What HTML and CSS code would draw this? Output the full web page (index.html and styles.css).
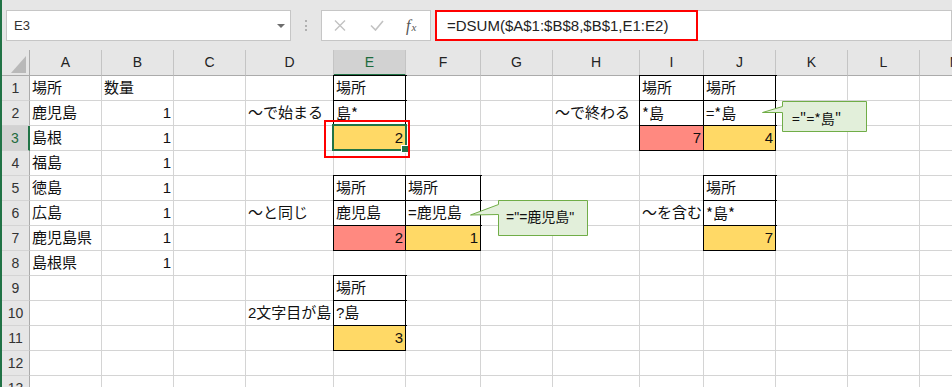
FILE: index.html
```html
<!DOCTYPE html>
<html lang="ja">
<head>
    <meta charset="UTF-8">
    <title>DSUM - ワイルドカード</title>
    <link rel="stylesheet" href="styles.css">
</head>
<body>
<div class="app">
    <div class="bar">
        <div class="namebox"><span>E3</span><i class="caret"></i></div>
        <div class="grip"></div>
        <div class="btns">
            <svg class="ic-x" width="12" height="11" viewBox="0 0 12 11"><path d="M1 0.5L11 10.5M11 0.5L1 10.5" stroke="#c2c2c2" stroke-width="1.4" fill="none"/></svg>
            <svg class="ic-ok" width="14" height="11" viewBox="0 0 14 11"><path d="M1 5.5L5.5 10L13 1" stroke="#c2c2c2" stroke-width="1.6" fill="none"/></svg>
            <span class="fx"><i>f</i><i class="x">x</i></span>
        </div>
        <div class="formula"><span class="mark">=DSUM($A$1:$B$8,$B$1,E1:E2)</span></div>
    </div>

    <div class="sheet">
        <div class="row hd"><span class="corner"><i></i></span><span>A</span><span>B</span><span>C</span><span>D</span><span class="on">E</span><span>F</span><span>G</span><span>H</span><span>I</span><span>J</span><span>K</span><span>L</span><span>M</span></div>
        <div class="row"><span class="rh">1</span><span>場所</span><span>数量</span><span></span><span></span><span class="b">場所</span><span></span><span></span><span></span><span class="b">場所</span><span class="b">場所</span><span></span><span></span><span></span></div>
        <div class="row"><span class="rh">2</span><span>鹿児島</span><span class="n">1</span><span></span><span>～で始まる</span><span class="b cj">島*</span><span></span><span></span><span>～で終わる</span><span class="b cj">*島</span><span class="b cj">=*島</span><span></span><span></span><span></span></div>
        <div class="row"><span class="rh on">3</span><span>島根</span><span class="n">1</span><span></span><span></span><span class="b y n">2</span><span></span><span></span><span></span><span class="b r n">7</span><span class="b y n">4</span><span></span><span></span><span></span></div>
        <div class="row"><span class="rh">4</span><span>福島</span><span class="n">1</span><span></span><span></span><span></span><span></span><span></span><span></span><span></span><span></span><span></span><span></span><span></span></div>
        <div class="row"><span class="rh">5</span><span>徳島</span><span class="n">1</span><span></span><span></span><span class="b">場所</span><span class="b">場所</span><span></span><span></span><span></span><span class="b">場所</span><span></span><span></span><span></span></div>
        <div class="row"><span class="rh">6</span><span>広島</span><span class="n">1</span><span></span><span>～と同じ</span><span class="b">鹿児島</span><span class="b">=鹿児島</span><span></span><span></span><span>～を含む</span><span class="b cj">*島*</span><span></span><span></span><span></span></div>
        <div class="row"><span class="rh">7</span><span>鹿児島県</span><span class="n">1</span><span></span><span></span><span class="b r n">2</span><span class="b y n">1</span><span></span><span></span><span></span><span class="b y n">7</span><span></span><span></span><span></span></div>
        <div class="row"><span class="rh">8</span><span>島根県</span><span class="n">1</span><span></span><span></span><span></span><span></span><span></span><span></span><span></span><span></span><span></span><span></span><span></span></div>
        <div class="row"><span class="rh">9</span><span></span><span></span><span></span><span></span><span class="b">場所</span><span></span><span></span><span></span><span></span><span></span><span></span><span></span><span></span></div>
        <div class="row"><span class="rh">10</span><span></span><span></span><span></span><span>2文字目が島</span><span class="b">?島</span><span></span><span></span><span></span><span></span><span></span><span></span><span></span><span></span></div>
        <div class="row"><span class="rh">11</span><span></span><span></span><span></span><span></span><span class="b y n">3</span><span></span><span></span><span></span><span></span><span></span><span></span><span></span><span></span></div>
        <div class="row"><span class="rh">12</span><span></span><span></span><span></span><span></span><span></span><span></span><span></span><span></span><span></span><span></span><span></span><span></span><span></span></div>
        <div class="row"><span class="rh">13</span><span></span><span></span><span></span><span></span><span></span><span></span><span></span><span></span><span></span><span></span><span></span><span></span><span></span></div>
    </div>

    <!-- overlays: active cell, annotation frame, comments -->
    <div class="active"><i class="handle"></i></div>
    <div class="frame"></div>

    <div class="note note-1">
        <svg width="120" height="40" viewBox="0 0 120 40"><path d="M28.5 1.5H117.5V36.5H28.5V15.5L0.5 16L28.5 5.5Z"/></svg>
        <span>="=鹿児島"</span>
    </div>
    <div class="note note-2">
        <svg width="108" height="36" viewBox="0 0 108 36"><path d="M20.5 1.5H104.5V31.5H20.5V12.5L0.5 12.5L20.5 6.5Z"/></svg>
        <span class="cj">="=*島"</span>
    </div>
</div>
</body>
</html>
```

FILE: styles.css
```css
* {
    box-sizing: border-box;
}
body {
    margin: 0;
    overflow: hidden;
    background: #fff;
    font-family: "Liberation Sans", "Noto Sans CJK JP", sans-serif;
    color: #111;
}
.app {
    position: relative;
    height: 387px;
    border-left: 2px solid #217346;
}

/* formula bar */
.bar {
    display: flex;
    align-items: flex-start;
    height: 50px;
    padding: 10px 0 0 4px;
    background: #e6e6e6;
}
.namebox {
    display: flex;
    align-items: center;
    justify-content: space-between;
    width: 285px;
    height: 31px;
    padding: 0 5px 0 7px;
    background: #fff;
    border: 1px solid #c6c6c6;
    font-size: 13px;
    color: #333;
}
.caret {
    width: 0;
    height: 0;
    border-left: 4px solid transparent;
    border-right: 4px solid transparent;
    border-top: 4px solid #6d6d6d;
}
.grip {
    width: 2px;
    height: 11px;
    margin: 10px 14px 0;
    background: repeating-linear-gradient(#b0b0b0 0 2px, transparent 2px 4.5px);
}
.btns {
    display: flex;
    align-items: center;
    width: 110px;
    height: 31px;
    padding-left: 12px;
    background: #fff;
    border: 1px solid #c6c6c6;
}
.ic-ok {
    margin-left: 24px;
}
.fx {
    margin-left: 22px;
    font-family: "Liberation Serif", serif;
    font-size: 16px;
    color: #555;
}
.fx .x {
    font-size: 11px;
    margin-left: 1px;
}
.formula {
    flex: 1;
    display: flex;
    height: 31px;
    margin-left: 4px;
    background: #fff;
    border: 1px solid #c6c6c6;
}
.mark {
    width: 263px;
    height: 31px;
    margin: -1px 0 -1px -1px;
    padding-left: 10px;
    border: 2px solid #f00;
    font-size: 15px;
    line-height: 27px;
    color: #222;
}

/* grid */
.row {
    display: grid;
    grid-template-columns: 28px 72px 72px 72px 88px 72px 75px 72px 87px 64px 72px 72px 72px 72px;
    height: 25px;
}
.row > span {
    padding: 0 2px;
    background: #fff;
    border-right: 1px solid #d4d4d4;
    border-bottom: 1px solid #d4d4d4;
    font-size: 15px;
    line-height: 24px;
    white-space: nowrap;
}
.row.hd {
    height: 26px;
}
.hd > span {
    background: #e6e6e6;
    border-right-color: #c4c4c4;
    border-bottom-color: #ababab;
    text-align: center;
    font-size: 14px;
    line-height: 25px;
    color: #222;
}
.hd > span.on {
    background: #d2d2d2;
    border-bottom: 2px solid #217346;
    line-height: 24px;
    color: #1d6b3c;
}
.hd .corner {
    display: flex;
    justify-content: flex-end;
    align-items: flex-end;
    padding: 0 3px 2px 0;
    border-right-color: #ababab;
}
.corner i {
    width: 0;
    height: 0;
    border-left: 15px solid transparent;
    border-bottom: 17px solid #b9b9b9;
}
.row > .rh {
    background: #e6e6e6;
    border-right-color: #ababab;
    text-align: center;
    font-size: 14px;
    color: #333;
}
.row > .rh.on {
    background: #d2d2d2;
    border-right: 2px solid #217346;
    color: #1d6b3c;
}
.row > .n {
    text-align: right;
}
.row > .b {
    border-right-color: #000;
    border-bottom-color: #000;
    box-shadow: 0 0 0 1px #000;
}
.row > .y {
    background: #ffd966;
}
.row > .r {
    background: #ff8980;
}
.cj {
    font-family: "Noto Sans CJK JP", sans-serif;
}

/* overlays */
.active {
    position: absolute;
    left: 330px;
    top: 124px;
    width: 75px;
    height: 27px;
    border: 2px solid #217346;
}
.handle {
    position: absolute;
    right: -4px;
    bottom: -4px;
    width: 8px;
    height: 8px;
    background: #217346;
    border: 1px solid #fff;
}
.frame {
    position: absolute;
    left: 322px;
    top: 120px;
    width: 86px;
    height: 38px;
    border: 2px solid #f00;
}
.note {
    position: absolute;
}
.note svg {
    display: block;
}
.note path {
    fill: #e2efda;
    stroke: #70ad47;
    stroke-width: 1;
}
.note span {
    position: absolute;
    top: 8px;
    font-size: 14px;
    line-height: 20px;
    white-space: nowrap;
    color: #111;
}
.note-1 {
    left: 468px;
    top: 199px;
}
.note-1 span {
    left: 36px;
}
.note-2 {
    left: 760px;
    top: 100px;
}
.note-2 span {
    left: 30px;
}
```
